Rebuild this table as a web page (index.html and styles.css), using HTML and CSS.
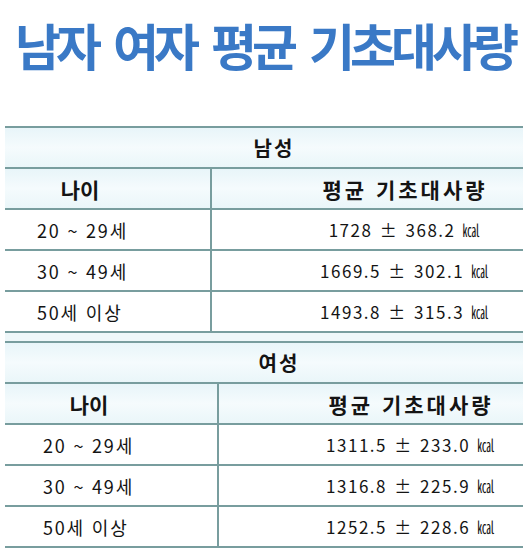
FILE: index.html
```html
<!DOCTYPE html>
<html lang="ko">
<head>
<meta charset="utf-8">
<title>남자 여자 평균 기초대사량</title>
<link rel="stylesheet" href="styles.css">
</head>
<body>
<main class="page">
  <h1 class="title">남자 여자 평균 기초대사량</h1>
  <div class="tables">
    <div class="bmr male">
      <div class="cell sec">남성</div>
      <div class="cell head left">나이</div>
      <div class="cell head right">평균 기초대사량</div>
      <div class="cell age">20 ~ 29세</div>
      <div class="cell val">1728 ± 368.2 ㎉</div>
      <div class="cell age">30 ~ 49세</div>
      <div class="cell val">1669.5 ± 302.1 ㎉</div>
      <div class="cell age">50세 이상</div>
      <div class="cell val">1493.8 ± 315.3 ㎉</div>
    </div>
    <div class="bmr female">
      <div class="cell sec">여성</div>
      <div class="cell head left">나이</div>
      <div class="cell head right">평균 기초대사량</div>
      <div class="cell age">20 ~ 29세</div>
      <div class="cell val">1311.5 ± 233.0 ㎉</div>
      <div class="cell age">30 ~ 49세</div>
      <div class="cell val">1316.8 ± 225.9 ㎉</div>
      <div class="cell age">50세 이상</div>
      <div class="cell val">1252.5 ± 228.6 ㎉</div>
    </div>
  </div>
</main>
</body>
</html>
```

FILE: styles.css
```css
html, body {
  margin: 0;
  padding: 0;
  background: #ffffff;
}

.page {
  width: 529px;
  font-family: "Noto Sans CJK KR", "Noto Sans", sans-serif;
  color: #141414;
}

.title {
  margin: 0;
  padding-top: 18px;
  height: 112px;
  box-sizing: border-box;
  font-size: 50px;
  line-height: 52px;
  font-weight: 700;
  color: #3a79c6;
  text-align: center;
  letter-spacing: -5px;
  word-spacing: 7px;
  white-space: nowrap;
}

.tables {
  display: flex;
  flex-direction: column;
  gap: 8px;
  margin: 14px 6px 0 5px;
  background: #eef7f9;
}

.bmr {
  display: grid;
  border-top: 2px solid #789d9e;
  background: #ffffff;
}

.male { grid-template-columns: 205px 1fr; }
.female { grid-template-columns: 212px 1fr; }

.cell {
  height: 39px;
  display: flex;
  align-items: center;
  border-bottom: 2px solid #789d9e;
  box-sizing: content-box;
  white-space: nowrap;
}

.sec {
  grid-column: 1 / -1;
  justify-content: center;
  font-size: 20px;
  font-weight: 700;
  letter-spacing: 2px;
  background: linear-gradient(#e8f5f9, #f5fbfd 50%, #eaf6f9);
}
.male .sec { padding-left: 20px; }
.female .sec { padding-left: 30px; }

.head {
  font-size: 21px;
  font-weight: 700;
  justify-content: center;
  background: linear-gradient(#e8f5f9, #f5fbfd 50%, #eaf6f9);
}
.head.right {
  letter-spacing: 3px;
}

.right, .val {
  border-left: 2px solid #789d9e;
  justify-content: center;
}
.male .head.left { padding-right: 55px; }
.female .head.left { padding-right: 44px; }
.male .right, .male .val { padding-left: 75px; }
.female .right, .female .val { padding-left: 80px; }

.age {
  font-size: 18px;
  letter-spacing: 1.8px;
}
.male .age { padding-left: 32px; }
.female .age { padding-left: 38px; }

.val {
  font-size: 17px;
  letter-spacing: 1.5px;
  word-spacing: 2px;
}
```
